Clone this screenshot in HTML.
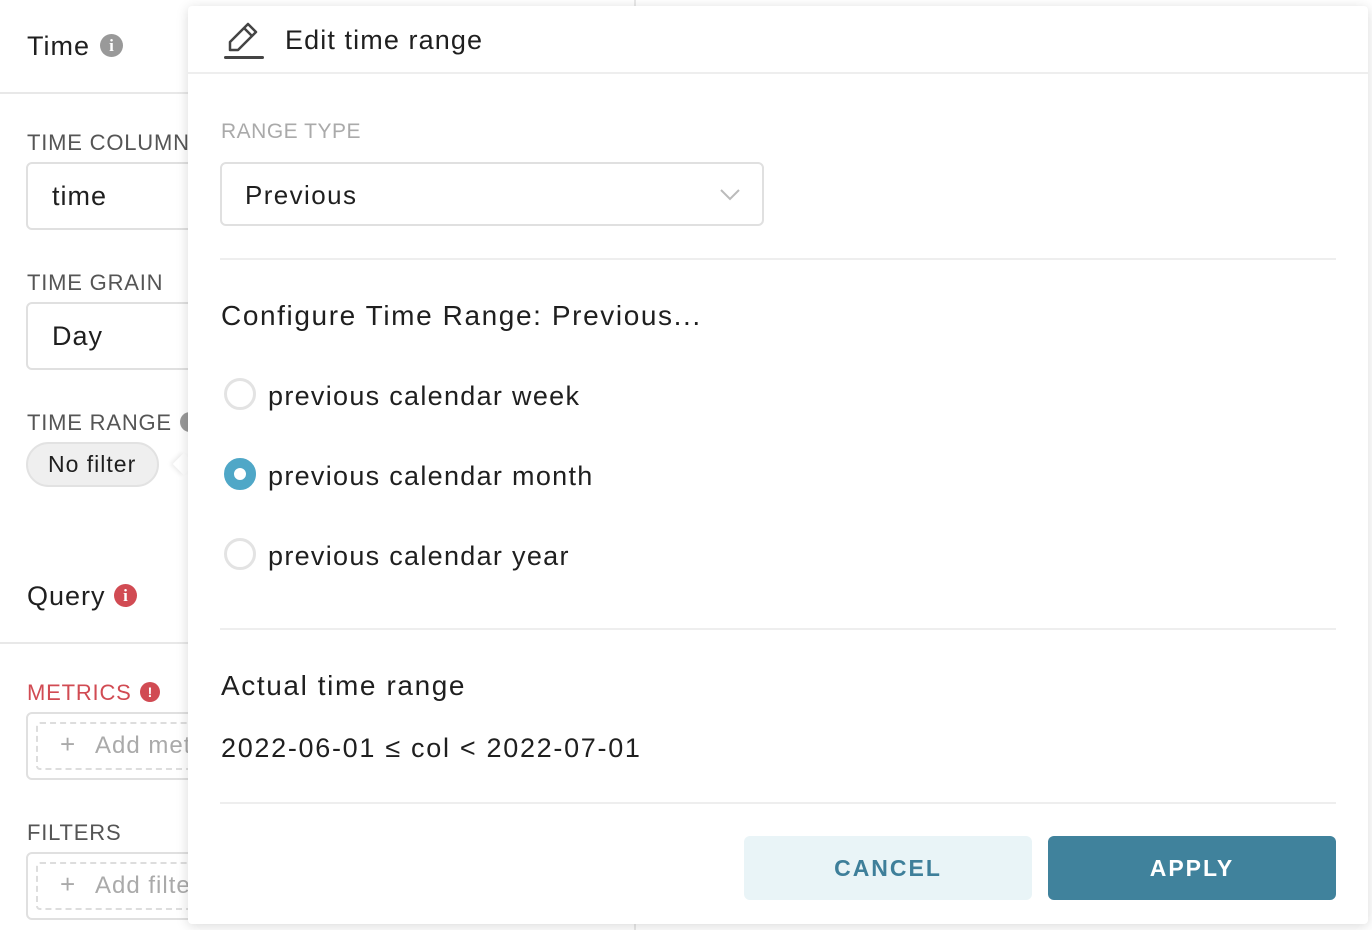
<!DOCTYPE html>
<html><head><meta charset="utf-8"><style>
*{margin:0;padding:0;box-sizing:border-box}
body{width:1372px;height:930px;overflow:hidden;background:#fff;font-family:"Liberation Sans",sans-serif;color:#1f1f1f;position:relative}
.a{position:absolute;white-space:nowrap}
.lbl{font-size:22px;color:#555;letter-spacing:0.8px}
.box{position:absolute;border:2px solid #e0e0e0;border-radius:6px;background:#fff}
.dash{position:absolute;border:2px dashed #ddd;border-radius:4px}
.radio{position:absolute;width:32px;height:32px;border-radius:50%;border:3px solid #e3e3e3;background:#fff}
.hr{position:absolute;height:2px;background:#eee}
</style></head><body>
<div class="a" style="left:27px;top:31px;font-size:27px;letter-spacing:1px">Time</div>
<div class="a" style="left:100px;top:34px;width:23px;height:23px;border-radius:50%;background:#999;color:#fff;font-size:17px;font-weight:bold;text-align:center;line-height:23px;font-family:'Liberation Serif',serif">i</div>
<div class="hr" style="left:0;top:92px;width:200px;background:#e8e8e8"></div>
<div class="a lbl" style="left:27px;top:130px">TIME COLUMN</div>
<div class="box" style="left:26px;top:162px;width:200px;height:68px"></div>
<div class="a" style="left:52px;top:181px;font-size:27px;letter-spacing:1px">time</div>
<div class="a lbl" style="left:27px;top:270px">TIME GRAIN</div>
<div class="box" style="left:26px;top:302px;width:200px;height:68px"></div>
<div class="a" style="left:52px;top:321px;font-size:27px;letter-spacing:1px">Day</div>
<div class="a lbl" style="left:27px;top:410px">TIME RANGE</div>
<div class="a" style="left:180px;top:412px;width:20px;height:20px;border-radius:50%;background:#999"></div>
<div class="a" style="left:26px;top:442px;width:133px;height:45px;border-radius:23px;background:#efefef;border:2px solid #e2e2e2;font-size:23px;line-height:41px;padding-left:20px;letter-spacing:1px">No filter</div>
<div class="a" style="left:27px;top:581px;font-size:27px;letter-spacing:1px">Query</div>
<div class="a" style="left:114px;top:584px;width:23px;height:23px;border-radius:50%;background:#d14b53;color:#fff;font-size:17px;font-weight:bold;text-align:center;line-height:23px;font-family:'Liberation Serif',serif">i</div>
<div class="hr" style="left:0;top:642px;width:200px;background:#e8e8e8"></div>
<div class="a lbl" style="left:27px;top:680px;color:#d14b53">METRICS</div>
<div class="a" style="left:140px;top:682px;width:20px;height:20px;border-radius:50%;background:#d14b53;color:#fff;font-size:14px;font-weight:bold;text-align:center;line-height:20px">!</div>
<div class="box" style="left:26px;top:712px;width:200px;height:68px"></div>
<div class="dash" style="left:36px;top:722px;width:190px;height:48px"></div>
<div class="a" style="left:60px;top:729px;font-size:26px;color:#aaa">+</div>
<div class="a" style="left:95px;top:732px;font-size:24px;color:#aaa;letter-spacing:1px">Add metric</div>
<div class="a lbl" style="left:27px;top:820px">FILTERS</div>
<div class="box" style="left:26px;top:852px;width:200px;height:68px"></div>
<div class="dash" style="left:36px;top:862px;width:190px;height:48px"></div>
<div class="a" style="left:60px;top:869px;font-size:26px;color:#aaa">+</div>
<div class="a" style="left:95px;top:872px;font-size:24px;color:#aaa;letter-spacing:1px">Add filter</div>
<div class="a" style="left:634px;top:0;width:2px;height:930px;background:#e8e8e8"></div>
<div class="a" style="left:176px;top:456px;width:16px;height:16px;background:#fff;transform:rotate(45deg);box-shadow:-2px 2px 4px rgba(0,0,0,.08)"></div>
<div class="a" style="left:188px;top:6px;width:1180px;height:918px;background:#fff;border-radius:4px;box-shadow:0 2px 12px rgba(0,0,0,.15)"></div>
<svg class="a" style="left:222px;top:20px" width="44" height="42" viewBox="0 0 44 42"><path d="M8 30 L8 22 L26 4 L34 12 L16 30 Z M22 8 L30 16" fill="none" stroke="#444" stroke-width="2.5" stroke-linejoin="round"/><rect x="2" y="36" width="40" height="3" rx="1.5" fill="#444"/></svg>
<div class="a" style="left:285px;top:25px;font-size:27px;letter-spacing:1.1px">Edit time range</div>
<div class="hr" style="left:188px;top:72px;width:1180px"></div>
<div class="a" style="left:221px;top:120px;font-size:21px;color:#aaa;letter-spacing:0.5px">RANGE TYPE</div>
<div class="box" style="left:220px;top:162px;width:544px;height:64px"></div>
<div class="a" style="left:245px;top:180px;font-size:26px;letter-spacing:1.4px">Previous</div>
<svg class="a" style="left:719px;top:187px" width="22" height="16"><path d="M2 3 L11 12 L20 3" fill="none" stroke="#bbb" stroke-width="2"/></svg>
<div class="hr" style="left:220px;top:258px;width:1116px"></div>
<div class="a" style="left:221px;top:300px;font-size:28px;letter-spacing:1.6px">Configure Time Range: Previous...</div>
<div class="radio" style="left:224px;top:378px"></div>
<div class="a" style="left:268px;top:381px;font-size:27px;letter-spacing:1.3px">previous calendar week</div>
<div class="radio" style="left:224px;top:458px;border:10px solid #4fa7c7"></div>
<div class="a" style="left:268px;top:461px;font-size:27px;letter-spacing:1.3px">previous calendar month</div>
<div class="radio" style="left:224px;top:538px"></div>
<div class="a" style="left:268px;top:541px;font-size:27px;letter-spacing:1.3px">previous calendar year</div>
<div class="hr" style="left:220px;top:628px;width:1116px"></div>
<div class="a" style="left:221px;top:670px;font-size:28px;letter-spacing:1.6px">Actual time range</div>
<div class="a" style="left:221px;top:733px;font-size:27px;letter-spacing:1.7px">2022-06-01 ≤ col &lt; 2022-07-01</div>
<div class="hr" style="left:220px;top:802px;width:1116px"></div>
<div class="a" style="left:744px;top:836px;width:288px;height:64px;background:#e9f4f7;border-radius:6px;color:#3e7f9a;font-size:23px;font-weight:bold;letter-spacing:2px;text-align:center;line-height:64px">CANCEL</div>
<div class="a" style="left:1048px;top:836px;width:288px;height:64px;background:#40829c;border-radius:6px;color:#fff;font-size:23px;font-weight:bold;letter-spacing:2px;text-align:center;line-height:64px">APPLY</div>
</body></html>
